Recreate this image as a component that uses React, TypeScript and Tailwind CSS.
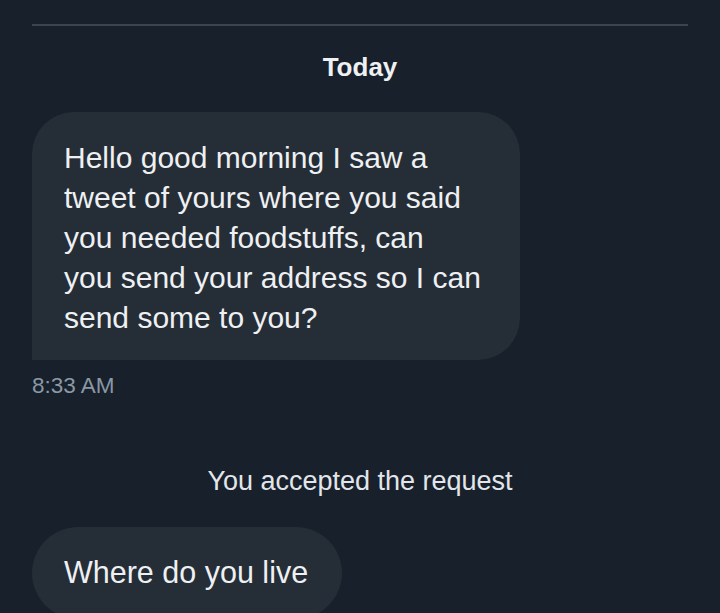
import React from "react";

export default function App() {
  return (
    <div
      className="w-[720px] h-[613px] overflow-hidden bg-[#17202b] text-[#eef0f2]"
      style={{ fontFamily: '"Liberation Sans", Arial, sans-serif' }}
    >
      <div className="pt-[24px] px-[32px]">
        <div className="h-[2px] bg-[#3a4550]" />
        <div className="mt-[25px] h-[32px] flex items-center justify-center text-[26px] font-bold leading-[32px]">
          Today
        </div>
        <div className="mt-[29px] w-[488px] bg-[#252d37] rounded-t-[42px] rounded-br-[42px] pl-[32px] pr-[16px] pt-[26px] pb-[22px] text-[30px] leading-[40px]">
          Hello good morning I saw a
          <br />
          tweet of yours where you said
          <br />
          you needed foodstuffs, can
          <br />
          you send your address so I can
          <br />
          send some to you?
        </div>
        <div className="mt-[13px] text-[22.5px] leading-[26px] text-[#8b98a5]">8:33 AM</div>
        <div className="mt-[67px] text-center text-[27px] leading-[30px] text-[#e2e6ea]">
          You accepted the request
        </div>
        <div className="mt-[31px] inline-flex h-[92px] items-start rounded-[46px] bg-[#252d37] pl-[32px] pr-[34px] pt-[25px] text-[30.5px] leading-[40px]">
          Where do you live
        </div>
      </div>
    </div>
  );
}
